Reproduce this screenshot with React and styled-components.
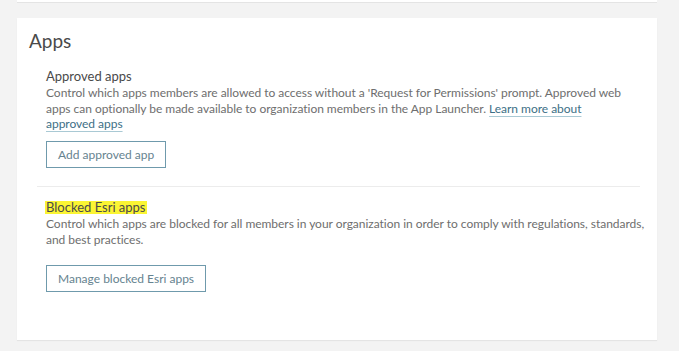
import React from "react";
import styled, { createGlobalStyle } from "styled-components";

const Global = createGlobalStyle`
  html, body { margin: 0; padding: 0; background: #f3f3f3; }
  body { font-family: Lato, "Open Sans", sans-serif; -webkit-font-smoothing: antialiased; }
`;

const Page = styled.div`
  width: 679px;
  height: 351px;
  box-sizing: border-box;
  padding: 0 22px 0 17px;
  display: flex;
  flex-direction: column;
  gap: 15px;
  overflow: hidden;
`;

const TopCard = styled.div`
  height: 2px;
  background: #fff;
  border-bottom: 1px solid #e4e4e4;
`;

const Card = styled.section`
  background: #fff;
  box-shadow: 0 1px 1px rgba(0, 0, 0, 0.06);
  padding: 11px 17px 48px 12px;
`;

const Title = styled.h2`
  margin: 0 0 14px;
  font-size: 19px;
  line-height: 24px;
  font-weight: 400;
  color: #4a4a4a;
`;

const Sections = styled.div`
  margin-left: 8px;
  display: flex;
  flex-direction: column;
`;

const Section = styled.div`
  padding: ${(p) => (p.$first ? "0 9px 18px" : "11px 9px 0")};
  border-top: ${(p) => (p.$first ? "none" : "1px solid #ececec")};
  display: flex;
  flex-direction: column;
  align-items: flex-start;
`;

const Heading = styled.h3`
  margin: 0;
  font-size: 13px;
  line-height: 18px;
  font-weight: 400;
  color: #4a4a4a;
`;

const Highlight = styled.span`
  display: inline-block;
  background: #fbf533;
  line-height: 13px;
  padding: 0 1px;
  margin-left: -1px;
`;

const Body = styled.p`
  margin: 0;
  font-size: 12px;
  line-height: ${(p) => p.$lh || "15.5px"};
  color: #6e6e6e;
  letter-spacing: -0.03px;
`;

const Line = styled.span`
  white-space: nowrap;
`;

const Link = styled.a`
  color: #3d6f86;
  text-decoration: underline;
  text-decoration-color: #a9c9d4;
  text-underline-offset: 3px;
  cursor: pointer;
`;

const Button = styled.button`
  margin-top: ${(p) => p.$mt}px;
  height: 27px;
  box-sizing: border-box;
  padding: 0 11px;
  background: #fff;
  border: 1px solid #6f9aac;
  color: #66838f;
  font-family: Lato, "Open Sans", sans-serif;
  font-size: 12px;
  cursor: pointer;
`;

export default function App() {
  return (
    <>
      <Global />
      <Page>
        <TopCard />
        <Card>
          <Title>Apps</Title>
          <Sections>
            <Section $first>
              <Heading>Approved apps</Heading>
              <Body>
                Control which apps members are allowed to access without a 'Request for Permissions' prompt. Approved web apps can optionally be made available to organization members in the App Launcher.{" "}
                <Link>Learn more about approved apps</Link>
              </Body>
              <Button $mt={9}>Add approved app</Button>
            </Section>
            <Section>
              <Heading>
                <Highlight>Blocked Esri apps</Highlight>
              </Heading>
              <Body $lh="16.5px">
                <Line>Control which apps are blocked for all members in your organization in order to comply with regulations, standards,</Line>
                <br />
                and best practices.
              </Body>
              <Button $mt={16}>Manage blocked Esri apps</Button>
            </Section>
          </Sections>
        </Card>
      </Page>
    </>
  );
}
